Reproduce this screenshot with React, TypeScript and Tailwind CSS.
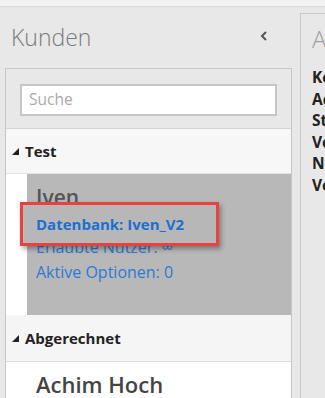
import React from "react";

function Tri() {
  return (
    <svg width="7" height="7" viewBox="0 0 7 7" className="shrink-0">
      <polygon points="7,0 7,7 0,7" fill="#222" />
    </svg>
  );
}

export default function App() {
  const labels = ["Kontakt:", "Adresse:", "Straße:", "Vorname:", "Name:", "Vertrag:"];
  return (
    <div className="relative w-[325px] h-[398px] overflow-hidden bg-[#e8e8e8] font-['Open_Sans',sans-serif]">
      <div className="h-[7px] bg-[#f2f2f2] border-b border-[#d9d9d9]" />
      <div className="flex">
        <div className="w-[292px] shrink-0 pl-[5px] flex flex-col">
          <div className="h-[61px] flex items-center justify-between pl-[6px] pr-[24px]">
            <span className="text-[23px] font-light text-[#7a7a7a] leading-none">Kunden</span>
            <svg width="8" height="10" viewBox="0 0 8 10" className="-mt-[4px]">
              <polyline points="6,1 2,5 6,9" fill="none" stroke="#555" strokeWidth="2" />
            </svg>
          </div>
          <div className="border-x border-t border-[#c6c6c6] flex flex-col h-[330px]">
            <div className="h-[60px] shrink-0 bg-[#e8e8e8] px-[14px] pt-[15px] border-b border-[#d4d4d4]">
              <div className="h-[32px] border-2 border-[#c6c6c6] bg-white flex items-center pl-[7px]">
                <span className="text-[15.5px] text-[#a9a9a9]">Suche</span>
              </div>
            </div>
            <div className="h-[45px] shrink-0 bg-[#f7f7f7] border-b border-[#e2e2e2] flex items-center gap-[6px] pl-[6px]">
              <Tri />
              <span className="text-[15px] font-bold text-[#222]">Test</span>
            </div>
            <div className="h-[141px] shrink-0 flex bg-white">
              <div className="w-[21px] shrink-0" />
              <div className="flex-1 bg-[#b8b8b8] pl-[9px] pt-[9px] flex flex-col">
                <span className="text-[21px] font-semibold text-[#555] leading-[28px]">Iven</span>
                <span className="text-[15px] text-[#2f78d2] leading-[24px]">Datenbank: Iven_V2</span>
                <span className="text-[16px] text-[#2f78d2] leading-[25px]">Erlaubte Nutzer: ∞</span>
                <span className="text-[16px] text-[#2f78d2] leading-[25px]">Aktive Optionen: 0</span>
              </div>
            </div>
            <div className="h-[47px] shrink-0 bg-[#f5f5f5] border-b border-[#dedede] flex items-center gap-[6px] pl-[6px]">
              <Tri />
              <span className="text-[15px] font-bold text-[#222]">Abgerechnet</span>
            </div>
            <div className="flex-1 bg-white pl-[30px] pt-[8px]">
              <span className="text-[22px] font-semibold text-[#444] leading-[28px]">Achim Hoch</span>
            </div>
          </div>
        </div>
        <div className="ml-[8px] mt-[6px] flex-1 border-l border-t border-[#c9c9c9] pl-[11px] overflow-hidden h-[400px]">
          <div className="text-[24px] font-light text-[#a0a0a0] leading-none mt-[13px] whitespace-nowrap">Allgemein</div>
          <div className="mt-[16px] flex flex-col">
            {labels.map((l) => (
              <span key={l} className="text-[15.5px] font-bold text-[#222] leading-[21.5px] whitespace-nowrap">
                {l}
              </span>
            ))}
          </div>
        </div>
      </div>
      <div className="absolute left-[20px] top-[202px] w-[199px] h-[44px] border-[3px] border-[#e8413f] bg-[#b7b7b7] shadow-[2px_3px_5px_rgba(0,0,0,0.35)] flex items-center pl-[13px]">
        <span className="text-[15px] font-bold text-[#1c6fd1] whitespace-nowrap">Datenbank: Iven_V2</span>
      </div>
    </div>
  );
}
